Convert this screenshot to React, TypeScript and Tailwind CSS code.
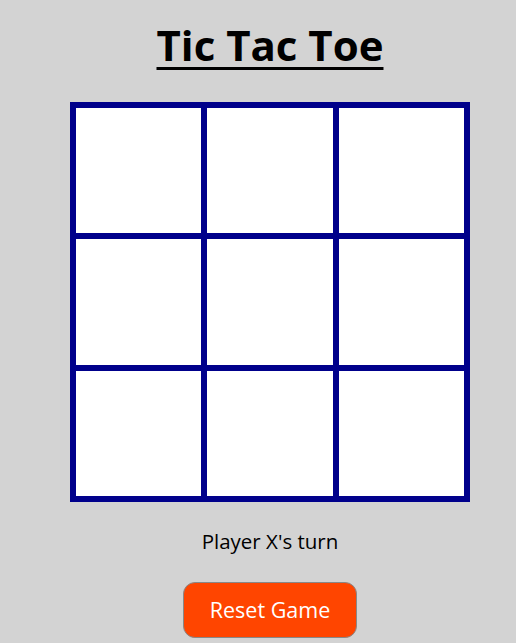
import { useState } from 'react';

type Cell = 'X' | 'O' | null;

export default function App() {
  const [board, setBoard] = useState<Cell[]>(Array(9).fill(null));
  const [player, setPlayer] = useState<'X' | 'O'>('X');

  const play = (i: number) => {
    if (board[i]) return;
    const next = [...board];
    next[i] = player;
    setBoard(next);
    setPlayer(player === 'X' ? 'O' : 'X');
  };

  const reset = () => {
    setBoard(Array(9).fill(null));
    setPlayer('X');
  };

  return (
    <div className="min-h-screen bg-[#d3d3d3] font-['Open_Sans',sans-serif] text-black">
      <div className="w-[540px] flex flex-col items-center">
        <h1 className="mt-[21px] text-[42px] leading-[48px] font-bold underline decoration-[3px] underline-offset-[6px]">
          Tic Tac Toe
        </h1>

        {/* Board */}
        <div className="mt-[33px] w-[400px] h-[400px] grid grid-cols-3 border-[3px] border-[#00008b]">
          {board.map((c, i) => (
            <button
              key={i}
              onClick={() => play(i)}
              className="border-[3px] border-[#00008b] bg-white text-[56px] font-bold"
            >
              {c}
            </button>
          ))}
        </div>

        <p className="mt-[25px] text-[20.5px] leading-[28px]">Player {player}'s turn</p>

        <button
          onClick={reset}
          className="mt-[27px] w-[174px] h-[56px] rounded-[12px] bg-[#ff4500] border border-[#888] text-white text-[21.5px]"
        >
          Reset Game
        </button>
      </div>
    </div>
  );
}
